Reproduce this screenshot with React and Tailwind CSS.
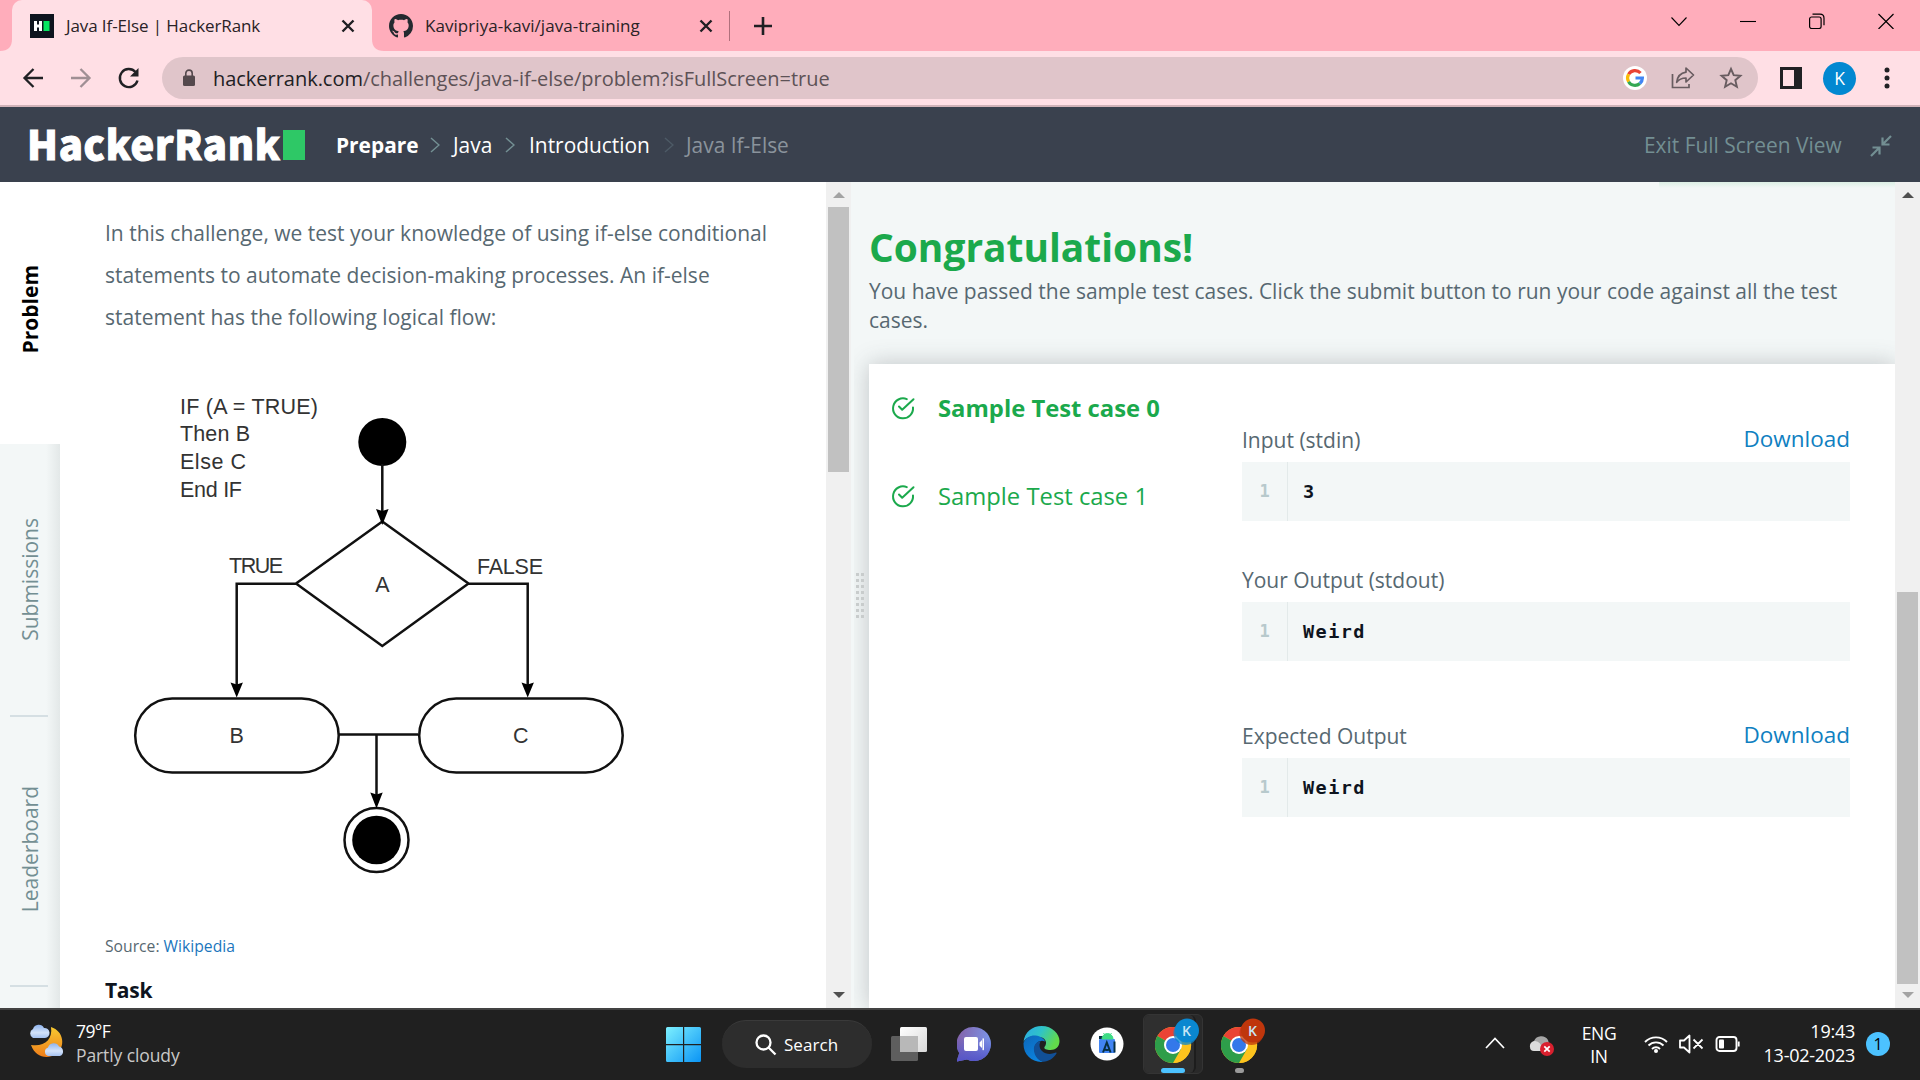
import React from "react";

const UI = "font-['Open_Sans','Noto_Sans',sans-serif]";

function Stroke({ w, h, vb, color = "currentColor", sw = 2, children, className = "" }) {
  return (
    <svg width={w} height={h} viewBox={vb || `0 0 ${w} ${h}`} fill="none" stroke={color} strokeWidth={sw} className={`shrink-0 ${className}`}>
      {children}
    </svg>
  );
}

function CloseX() {
  return (
    <Stroke w={14} h={14} sw={2.4} color="#1f1f23">
      <path d="M1.5 1.5l11 11M12.5 1.5l-11 11" />
    </Stroke>
  );
}

function TabStrip() {
  return (
    <div className="flex h-[51px] shrink-0 bg-[#ffadbb] text-[#2a2226]">
      <svg width="12" height="51" className="shrink-0">
        <path d="M12 0v51H0c8 0 12-4 12-12z" fill="#ffdfe5" />
      </svg>
      <div className="flex h-[51px] w-[360px] items-center rounded-t-[10px] bg-[#ffdfe5] pl-[18px]">
        <svg width="24" height="24" viewBox="0 0 24 24" className="shrink-0">
          <rect width="24" height="24" fill="#0e141e" />
          <path d="M4 7h3v3.6h2V7h3v10H9v-3.6H7V17H4z" fill="#fff" />
          <rect x="13.5" y="7" width="6" height="10" fill="#05e561" />
        </svg>
        <span className="ml-3 w-[275px] whitespace-nowrap text-[17px] tracking-[-0.1px]">Java If-Else | HackerRank</span>
        <CloseX />
      </div>
      <svg width="12" height="51" className="shrink-0">
        <path d="M0 0v51H12C4 51 0 47 0 39z" fill="#ffdfe5" />
      </svg>
      <div className="flex items-center pl-[5px]">
        <svg width="24" height="24" viewBox="0 0 16 16" fill="#24292f" className="shrink-0">
          <path d="M8 0C3.58 0 0 3.58 0 8c0 3.54 2.29 6.53 5.47 7.59.4.07.55-.17.55-.38 0-.19-.01-.82-.01-1.49-2.01.37-2.53-.49-2.69-.94-.09-.23-.48-.94-.82-1.13-.28-.15-.68-.52-.01-.53.63-.01 1.08.58 1.23.82.72 1.21 1.87.87 2.33.66.07-.52.28-.87.51-1.07-1.78-.2-3.64-.89-3.64-3.95 0-.87.31-1.59.82-2.15-.08-.2-.36-1.02.08-2.12 0 0 .67-.21 2.2.82.64-.18 1.32-.27 2-.27s1.36.09 2 .27c1.53-1.04 2.2-.82 2.2-.82.44 1.1.16 1.92.08 2.12.51.56.82 1.27.82 2.15 0 3.07-1.87 3.75-3.65 3.95.29.25.54.73.54 1.48 0 1.07-.01 1.93-.01 2.2 0 .21.15.46.55.38A8.01 8.01 0 0016 8c0-4.42-3.58-8-8-8z" />
        </svg>
        <span className="ml-3 w-[274px] whitespace-nowrap text-[17px] tracking-[0.05px]">Kavipriya-kavi/java-training</span>
        <CloseX />
        <div className="ml-[16px] h-[30px] w-px bg-[#b0707c]" />
        <Stroke w={20} h={20} sw={2.6} color="#1f1f23" className="ml-[23px]">
          <path d="M10 1v18M1 10h18" />
        </Stroke>
      </div>
      <div className="ml-auto flex items-start gap-[53px] pr-[26px] pt-[13px] text-black">
        <Stroke w={16} h={16} sw={1.1}><path d="M.5 4.5l7.5 8 7.5-8" /></Stroke>
        <Stroke w={16} h={16} sw={1.1}><path d="M0 8.5h16" /></Stroke>
        <Stroke w={16} h={16} sw={1.2}>
          <rect x=".6" y="4" width="11.500" height="11.500" rx="2" />
          <path d="M3.500 1.200h7.500q4 0 4 4v7" />
        </Stroke>
        <Stroke w={16} h={16} sw={1.2}><path d="M.5 1l15 15M15.500 1l-15 15" /></Stroke>
      </div>
    </div>
  );
}

function Toolbar() {
  return (
    <div className="flex h-14 shrink-0 items-center border-b-2 border-[#d0b2b8] bg-[#ffdfe5] text-[#202124]">
      <Stroke w={22} h={22} sw={2.3} className="ml-[22px]"><path d="M21 11H3M11.500 2L2.500 11l9 9" /></Stroke>
      <Stroke w={22} h={22} sw={2.3} color="#a08f94" className="ml-[26px]"><path d="M1 11h18M10.500 2l9 9-9 9" /></Stroke>
      <svg width="24" height="24" viewBox="0 0 24 24" className="ml-[25px] shrink-0">
        <path d="M20.500 14.500A9 9 0 1 1 18.500 6" fill="none" stroke="#202124" strokeWidth="2.4" />
        <path d="M21.500 2v8.500h-8.500z" fill="#202124" />
      </svg>
      <div className="ml-[21px] flex h-[42px] w-[1596px] items-center rounded-full bg-[#e0c5ca]">
        <svg width="14" height="18" viewBox="0 0 14 18" className="ml-5 shrink-0">
          <rect x="1" y="6.500" width="12" height="10.500" rx="1.500" fill="#55494d" />
          <path d="M3.800 7V4.300a3.200 3.200 0 0 1 6.400 0V7" fill="none" stroke="#55494d" strokeWidth="1.600" />
        </svg>
        <span className="ml-[17px] whitespace-nowrap pt-[2px] text-[20px] tracking-[-0.03px] text-[#5d5256]">
          <span className="text-[#202124]">hackerrank.com</span>/challenges/java-if-else/problem?isFullScreen=true
        </span>
        <div className="ml-auto mr-[15px] flex items-center">
          <svg width="24" height="24" viewBox="0 0 24 24">
            <circle cx="12" cy="12" r="12" fill="#fff" />
            <g fill="none" strokeWidth="3.200">
              <path d="M17.500 7A7.400 7.400 0 0 0 5.600 8.300" stroke="#ea4335" />
              <path d="M5.600 8.300a7.400 7.400 0 0 0 0 7.400" stroke="#fbbc05" />
              <path d="M5.600 15.700a7.400 7.400 0 0 0 11.300 1.800" stroke="#34a853" />
              <path d="M16.900 17.500a7.400 7.400 0 0 0 2.500-5.500H12.500" stroke="#4285f4" />
            </g>
          </svg>
          <Stroke w={24} h={24} sw={1.700} color="#685c60" className="ml-[24px]">
            <path d="M1.500 8v13.500h16.500V18" />
            <path d="M15 2l7.500 7L15 16v-4c-4.500 0-7.200 1.400-9.300 4.300C6.400 11 9.500 7 15 6.200z" strokeLinejoin="round" />
          </Stroke>
          <Stroke w={24} h={24} sw={1.900} color="#685c60" className="ml-[24px]">
            <path d="M12 3l2.700 6.200 6.700.6-5.100 4.400 1.600 6.600L12 17.300l-5.900 3.500 1.600-6.600-5.100-4.400 6.700-.6z" />
          </Stroke>
        </div>
      </div>
      <svg width="22" height="22" viewBox="0 0 22 22" className="ml-[22px] shrink-0">
        <path d="M0 0h22v22H0zM3 3v16h11V3z" fill="#202124" fillRule="evenodd" />
      </svg>
      <div className="ml-[21px] flex h-[33px] w-[33px] items-center justify-center rounded-full bg-[#0288d1] text-[17.500px] text-white">K</div>
      <svg width="6" height="22" className="ml-[28px]" fill="#202124">
        <circle cx="3" cy="3" r="2.500" /><circle cx="3" cy="11" r="2.500" /><circle cx="3" cy="19" r="2.500" />
      </svg>
    </div>
  );
}

function Crumb({ color }) {
  return <Stroke w={10} h={16} sw={1.500} color={color}><path d="M1 1l8 7-8 7" /></Stroke>;
}

function SiteHeader() {
  return (
    <div className="flex h-[75px] shrink-0 items-center bg-[#3a414e] pt-[1px] text-[20.900px] text-white">
      <span className="ml-[27px] h-[75px] w-[256px] whitespace-nowrap font-['Noto_Sans_CJK_SC','Open_Sans',sans-serif] text-[40px] font-black leading-[70px] tracking-[0.700px] [-webkit-text-stroke:1px_white]">HackerRank</span>
      <div className="h-[30px] w-[22px] bg-[#2ec866]" />
      <span className="ml-[31px] w-[94px] pt-[2px] font-bold">Prepare</span>
      <Crumb color="#738f93" />
      <span className="ml-[13px] w-[52px] pt-[2px]">Java</span>
      <Crumb color="#738f93" />
      <span className="ml-[14px] w-[135px] whitespace-nowrap pt-[2px]">Introduction</span>
      <Crumb color="#4d5a66" />
      <span className="ml-[12px] whitespace-nowrap pt-[2px] text-[#8a939c]">Java If-Else</span>
      <span className="ml-auto w-[226px] whitespace-nowrap pt-[2px] text-[#738f93]">Exit Full Screen View</span>
      <Stroke w={22} h={22} sw={2.200} color="#738f93" className="mr-[28px] mt-[1px]">
        <path d="M21 1l-8 8M12.500 2.500V9.500H19.500M1 21l8-8M2.500 12.500H9.500V19.500" />
      </Stroke>
    </div>
  );
}

function SideTabs() {
  const tab = "flex w-[60px] items-center justify-center";
  const text = "rotate-180 whitespace-nowrap [writing-mode:vertical-rl] text-[21px] leading-[28px]";
  return (
    <div className="flex w-[60px] shrink-0 flex-col bg-[linear-gradient(90deg,#f3f7f7_0px,#f3f7f7_46px,#e3e8e8_60px)] text-[#738f93]">
      <div className={`${tab} h-[262px] bg-white pb-[7px] pr-[1px]`}><span className={`${text} font-bold text-black`}>Problem</span></div>
      <div className={`${tab} h-[271px] pr-[1px]`}><span className={text}>Submissions</span></div>
      <div className="ml-[10px] h-[2px] w-[38px] bg-[#d5dfe3]" />
      <div className={`${tab} h-[268px] pb-[3px] pr-[1px]`}><span className={text}>Leaderboard</span></div>
      <div className="ml-[10px] h-[2px] w-[38px] bg-[#d5dfe3]" />
    </div>
  );
}

function ScrollTri({ up, dark }) {
  return (
    <svg width="12" height="6" className="mx-auto shrink-0">
      <path d={up ? "M0 6L6 0L12 6z" : "M0 0L6 6L12 0z"} fill={dark ? "#505050" : "#a3a3a3"} />
    </svg>
  );
}

function Flowchart() {
  const label = { fontFamily: "'Liberation Sans', Arial, sans-serif", fontSize: 21.5, fill: "#333", stroke: "none" };
  return (
    <svg width="520" height="500" viewBox="120 390 520 500" className="ml-[15px] block shrink-0" fill="none" stroke="#111" strokeWidth="2.500">
      <g style={label}>
        <text x="180" y="413.500" textLength="138">IF (A = TRUE)</text>
        <text x="180" y="440.500" textLength="70">Then B</text>
        <text x="180" y="469" textLength="66">Else C</text>
        <text x="180" y="497" textLength="62">End IF</text>
        <text x="229" y="572.500" textLength="54">TRUE</text>
        <text x="477" y="574" textLength="66">FALSE</text>
        <text x="382.300" y="591.500" textAnchor="middle">A</text>
        <text x="236.700" y="743" textAnchor="middle">B</text>
        <text x="520.800" y="743" textAnchor="middle">C</text>
      </g>
      <circle cx="382.300" cy="442" r="24" fill="#000" stroke="none" />
      <path d="M382.300 464V512M382.300 521.500L468.500 583.500L382.300 646L296 583.500zM296 583.700H236.700V688M468 583.700H527.700V688M339 734.500H418M376.500 734.500V798" />
      <rect x="135.200" y="698.500" width="203.500" height="74" rx="37" />
      <rect x="419.200" y="698.500" width="203.500" height="74" rx="37" />
      <circle cx="376.500" cy="840" r="32" />
      <circle cx="376.500" cy="840" r="24.300" fill="#000" stroke="none" />
      <g fill="#000" stroke="none">
        <path d="M376 509l6.300 2 6.300-2-6.300 16z" />
        <path d="M230.500 682.500l6.200 2 6.200-2-6.200 15z" />
        <path d="M521.500 682.500l6.200 2 6.200-2-6.200 15z" />
        <path d="M370.300 792.500l6.200 2 6.200-2-6.200 16z" />
      </g>
    </svg>
  );
}

function ProblemPane() {
  return (
    <div className="flex w-[766px] shrink-0 flex-col overflow-hidden bg-white pl-[45px] pt-[31px]">
      <p className="whitespace-nowrap text-[21px] leading-[41.900px] text-[#576871]">
        In this challenge, we test your knowledge of using if-else conditional<br />
        statements to automate decision-making processes. An if-else<br />
        statement has the following logical flow:
      </p>
      <div className="mt-[51px]"><Flowchart /></div>
      <p className="mt-[42px] h-[28px] whitespace-nowrap text-[15.700px] leading-[28px] text-[#576871]">
        Source: <span className="text-[#1b76bd]">Wikipedia</span>
      </p>
      <p className="mt-[14px] text-[21px] font-bold leading-[32px] text-[#0e141e] tracking-[-0.3px]">Task</p>
    </div>
  );
}

function CheckIcon() {
  return (
    <Stroke w={24} h={24} sw={2} color="#1ba94c">
      <path d="M22 11.500a10 10 0 1 1-6.200-8.400" strokeLinecap="round" />
      <path d="M8 10.500l3.200 3.300L22.500 3.300" strokeLinecap="round" strokeLinejoin="round" />
    </Stroke>
  );
}

function OutputBlock({ title, link, value }) {
  return (
    <div>
      <div className="flex h-[36px] items-start justify-between leading-[28px] text-[#576871]">
        <span className="whitespace-nowrap text-[21px]">{title}</span>
        {link && <span className="-mt-[1px] text-[22.500px] text-[#0f80c1]">Download</span>}
      </div>
      <div className="flex h-[59px] w-[608px] items-center bg-[#f3f7f7] font-['DejaVu_Sans_Mono',monospace] text-[18.500px] font-bold tracking-[1.450px]">
        <div className="flex h-full w-[46px] items-center justify-center border-r border-[#e3eaea] text-[17px] tracking-normal text-[#b7c9cc]">1</div>
        <span className="pl-[15px] text-[#0e141e]">{value}</span>
      </div>
    </div>
  );
}

function ResultPane() {
  return (
    <div className="flex w-[1026px] shrink-0 flex-col bg-[#f3f7f7]">
      <div className="ml-[790px] h-[6px] w-[236px] bg-[linear-gradient(180deg,#dcefe5,#f3f7f7)]" />
      <h1 className="mt-[31px] whitespace-nowrap text-[38.900px] font-bold leading-[56px] text-[#1ba94c]">Congratulations!</h1>
      <p className="mt-[2px] h-[87px] whitespace-nowrap text-[20.970px] leading-[29px] text-[#576871]">
        You have passed the sample test cases. Click the submit button to run your code against all the test<br />cases.
      </p>
      <div className="flex flex-1 bg-white shadow-[0_0_22px_rgba(60,70,75,0.28)]">
        <div className="flex w-[373px] flex-col gap-[56px] pl-[22px] pt-[28px] text-[23.800px] leading-[32px] text-[#1ba94c]">
          <div className="flex items-center gap-[23px]"><CheckIcon /><span className="whitespace-nowrap font-bold">Sample Test case 0</span></div>
          <div className="flex items-center gap-[23px]"><CheckIcon /><span className="whitespace-nowrap">Sample Test case 1</span></div>
        </div>
        <div className="flex flex-col pt-[62px]">
          <OutputBlock title="Input (stdin)" link value="3" />
          <div className="h-[45px]" />
          <OutputBlock title="Your Output (stdout)" value="Weird" />
          <div className="h-[61px]" />
          <OutputBlock title="Expected Output" link value="Weird" />
        </div>
      </div>
    </div>
  );
}

function Main() {
  return (
    <div className="flex h-[826px] shrink-0 overflow-hidden bg-white">
      <SideTabs />
      <ProblemPane />
      <div className="z-10 flex w-[25px] shrink-0 flex-col bg-[#f0f0f0] pt-[10px]">
        <ScrollTri up />
        <div className="ml-[2px] mt-[9px] h-[265px] w-[21px] bg-[#c1c1c1]" />
        <div className="mt-auto pb-[10px]"><ScrollTri dark /></div>
      </div>
      <div className="z-10 w-[3px] shrink-0 bg-[#f3f7f7]" />
      <div className="flex w-[15px] shrink-0 items-start bg-[#f3f7f7] pl-[2px] pt-[391px]">
        <div className="grid grid-cols-2 gap-x-[2px] gap-y-[3px]">
          {Array.from({ length: 16 }, (_, i) => <div key={i} className="relative z-10 h-[3px] w-[3px] bg-[#c8cccc]" />)}
        </div>
      </div>
      <ResultPane />
      <div className="z-10 flex w-[25px] shrink-0 flex-col bg-[#f0f0f0] pt-[10px]">
        <ScrollTri up dark />
        <div className="ml-[2px] mt-[394px] h-[392px] w-[21px] bg-[#c1c1c1]" />
        <div className="mt-auto pb-[10px]"><ScrollTri /></div>
      </div>
    </div>
  );
}

function Chrome({ badge }) {
  return (
    <svg width="46" height="48" viewBox="0 0 46 48" className="shrink-0">
      <circle cx="18" cy="30" r="18" fill="#fcc31e" />
      <path d="M18 30L2.400 21A18 18 0 0 1 33.600 21z" fill="#ea4335" />
      <path d="M33.600 21H18L25.800 34.500 18 48A18 18 0 0 0 33.600 21z" fill="#fcc31e" />
      <path d="M2.400 21A18 18 0 0 0 18 48l8-14-8-4z" fill="#2e9e4a" />
      <circle cx="18" cy="30" r="9" fill="#fff" />
      <circle cx="18" cy="30" r="7" fill="#3478ea" />
      <circle cx="30.500" cy="18" r="12" fill={badge} opacity=".75" />
      <circle cx="32" cy="15.500" r="12" fill={badge} />
      <text x="31.500" y="20.500" textAnchor="middle" fontSize="14" fontWeight="600" fill="#c9e6f5" fontFamily="Open Sans, sans-serif">K</text>
    </svg>
  );
}

function Taskbar() {
  return (
    <div className="flex h-[72px] shrink-0 border-t-2 border-[#434343] bg-[#202020] text-white">
      <div className="flex w-[666px] items-start pl-[28px] pt-[9px]">
        <svg width="38" height="38" viewBox="0 0 38 38" className="mt-[4px] shrink-0">
          <defs>
            <linearGradient id="moon" x2="0" y2="1"><stop stopColor="#f7c931" /><stop offset="1" stopColor="#ef7d1a" /></linearGradient>
            <linearGradient id="cloud" x2="0" y2="1"><stop stopColor="#8fb4ee" /><stop offset=".6" stopColor="#d4e3fa" /><stop offset="1" stopColor="#a5c2f1" /></linearGradient>
          </defs>
          <path d="M23 4C36 8 38 24 28 31C19 37 7 34 3 22C16 24 25 17 23 4z" fill="url(#moon)" />
          <path d="M5 15a5 5 0 0 1 0-9a6 6 0 0 1 11-1a5 5 0 0 1 1 10z" fill="url(#cloud)" />
          <path d="M20 33a4.500 4.500 0 0 1 0-8.500a6 6 0 0 1 11-1a5 5 0 0 1 1 9.500z" fill="url(#cloud)" />
        </svg>
        <div className="ml-[10px] whitespace-nowrap text-[17.500px] leading-[24px] tracking-[-0.100px]">
          <div className="tracking-[-0.600px]">79°F</div>
          <div className="text-[#c8c8c8]">Partly cloudy</div>
        </div>
      </div>
      <svg width="35" height="35" viewBox="0 0 35 35" className="mt-[17px] shrink-0">
        <defs><linearGradient id="win" x2="1" y2="1"><stop stopColor="#7df0ff" /><stop offset="1" stopColor="#0a94f5" /></linearGradient></defs>
        <path d="M0 1.500Q0 0 1.500 0H17V17H0zM18.200 0H33.500Q35 0 35 1.500V17H18.200zM0 18.200H17V35H1.500Q0 35 0 33.500zM18.200 18.200H35V33.500Q35 35 33.500 35H18.200z" fill="url(#win)" />
      </svg>
      <div className="ml-[21px] mt-[10px] flex h-[48px] w-[150px] items-center rounded-full border-t border-[#3a3a3a] bg-[#2d2d2d] pl-[33px]">
        <Stroke w={22} h={22} sw={2.300}><circle cx="8.500" cy="8.500" r="7" /><path d="M13.500 13.500l7 7" /></Stroke>
        <span className="ml-[7px] text-[17px] tracking-[0.050px]">Search</span>
      </div>
      <svg width="37" height="36" viewBox="0 0 37 36" className="ml-[19px] mt-[17px] shrink-0">
        <defs><linearGradient id="tv" x2="1" y2="1"><stop stopColor="#fff" /><stop offset="1" stopColor="#d9d9d9" /></linearGradient></defs>
        <rect x="9" y="0" width="27" height="25" rx="1.500" fill="url(#tv)" />
        <rect x="0" y="9" width="27" height="25" rx="1.500" fill="#5e5e5e" />
        <path d="M9 9H27V25H9z" fill="#b8b8b8" />
      </svg>
      <svg width="35" height="36" viewBox="0 0 35 36" className="ml-[29px] mt-[17px] shrink-0">
        <defs><linearGradient id="chat" x1="0" x2="1" y1=".1" y2=".3"><stop stopColor="#8460a6" /><stop offset="1" stopColor="#7b96ea" /></linearGradient>
          <linearGradient id="chat2" x2="0" y2="1"><stop offset=".3" stopColor="#4f52c8" stopOpacity="0" /><stop offset="1" stopColor="#5454c8" /></linearGradient></defs>
        {["url(#chat)", "url(#chat2)"].map((f) => <path key={f} d="M17 0a17 17 0 1 1-7 32.500L0 34.500V33L2.200 26A17 17 0 0 1 17 0z" fill={f} />)}
        <rect x="7" y="10" width="14" height="14" rx="2" fill="#fff" />
        <path d="M22.500 15.500l2.500-2.500v8l-2.500-2.500zM25.500 11.500q1.500-1 1.500 1v9.500q0 2-1.500 1z" fill="#fff" />
      </svg>
      <svg width="37" height="36" viewBox="0 0 36 36" className="ml-[31px] mt-[16px] shrink-0">
        <defs>
          <linearGradient id="edgeTop" x2="1" y2=".4"><stop stopColor="#2ba9e8" /><stop offset=".5" stopColor="#2fc3c8" /><stop offset="1" stopColor="#62da4b" /></linearGradient>
          <linearGradient id="edgeBody" x2=".6" y2="1"><stop stopColor="#0d66b8" /><stop offset="1" stopColor="#0b84e0" /></linearGradient>
        </defs>
        <path d="M0 16C1 6 9 0 18 0c11 0 18 8 18 15 0 6-4 9-9 9-4 0-7-1-6-3 4-5 0-10-6-10C8 9 2 12 0 16z" fill="url(#edgeTop)" />
        <path d="M0 17C2 11 8 9 12 9.500c5 .5 9 3.500 9.500 6C17 13 11 17 11 23c0 6 4 11 9 12.800C9 37 0 29 0 18z" fill="url(#edgeBody)" />
        <path d="M17 15c-5 1-7 5-6.500 9.500C11 31 16 35.500 20 35.800c5-.3 10-3.300 13-8.300.3-1-.5-1.200-1.300-.7C24 30 15.500 26 16 18.500z" fill="#114f96" />
      </svg>
      <svg width="34" height="34" viewBox="0 0 34 34" className="ml-[30px] mt-[17px] shrink-0">
        <circle cx="17" cy="17" r="16.500" fill="#fff" />
        <rect x="9" y="12" width="16" height="14" rx="1" fill="#4285f4" />
        <path d="M9 9h4v3H9z" fill="#073042" />
        <path d="M12 12a5.500 5.500 0 0 1 11 0zM13.500 6l2 3M21.500 6l-2 3" fill="#3ddc84" stroke="#3ddc84" />
        <path d="M13 25.500l3.800-10 3.800 10M14 22q3 2 6 0M24.500 14.500v11" fill="none" stroke="#073042" strokeWidth="2" />
      </svg>
      <div className="ml-[19px] mt-[4px] flex h-[60px] w-[60px] rounded-[6px] border border-[#343434] bg-[#292929]">
        <div className="flex h-full w-[52px] shrink-0 flex-col rounded-[6px] border-r-2 border-[#1d1d1d] bg-[#2f2f2f] pl-[11px]">
          <div className="h-[53px]"><Chrome badge="#0a87d0" /></div>
          <div className="ml-[6px] h-[5px] w-[24px] rounded-full bg-[#4cc2ff]" />
        </div>
      </div>
      <div className="ml-[18px] flex flex-col pt-[5px]">
        <div className="h-[53px]"><Chrome badge="#bf360c" /></div>
        <div className="ml-[14px] h-[5px] w-[9px] rounded-full bg-[#9a9a9a]" />
      </div>
      <div className="ml-auto flex items-start">
        <Stroke w={20} h={12} sw={1.700} className="mt-[27px]"><path d="M1 11l9-9.500 9 9.500" /></Stroke>
        <svg width="26" height="22" viewBox="0 0 26 22" className="ml-[24px] mt-[25px] shrink-0">
          <path d="M6 16A5.500 5.500 0 0 1 5 6 8 8 0 0 1 19 5l3 11z" fill="#a6a6a6" />
          <path d="M1 12a5 5 0 0 1 5-6q6 0 8 10H5q-4 0-4-4z" fill="#dcdcdc" />
          <circle cx="18" cy="14" r="7" fill="#d9202e" />
          <path d="M15.300 11.300l5.400 5.400M20.700 11.300l-5.400 5.400" stroke="#fff" strokeWidth="1.700" />
        </svg>
        <div className="mt-[12px] w-[88px] text-center text-[17.500px] leading-[23px] tracking-[-0.400px]">ENG<br />IN</div>
        <Stroke w={26} h={20} sw={1.900} className="mt-[24px]">
          <path d="M2 8a15.500 15.500 0 0 1 22 0M5.500 11.500a10.600 10.600 0 0 1 15 0M9 15a5.600 5.600 0 0 1 8 0" />
          <circle cx="13" cy="17" r="2" fill="#fff" stroke="none" />
        </Stroke>
        <Stroke w={25} h={20} sw={1.800} className="ml-[10px] mt-[24px]">
          <path d="M1 6.500h4l5.500-5v17l-5.500-5H1zM14.500 5.500l9 9M23.500 5.500l-9 9" strokeLinejoin="round" />
        </Stroke>
        <Stroke w={26} h={18} sw={1.900} className="ml-[11px] mt-[25px]">
          <rect x="1.500" y="2" width="20" height="14" rx="3" />
          <rect x="4" y="4.500" width="5" height="9" rx="1" fill="#fff" stroke="none" />
          <path d="M23.700 6.500v5" />
        </Stroke>
        <div className="mt-[9px] w-[114px] whitespace-nowrap text-right text-[18px] leading-[24px] tracking-[-0.250px]">19:43<br />13-02-2023</div>
        <div className="ml-[11px] mr-[30px] mt-[22px] flex h-[24px] w-[24px] items-center justify-center rounded-full bg-[#4cc2ff] text-[16px] text-black">1</div>
      </div>
    </div>
  );
}

export default function App() {
  return (
    <div className={`flex h-[1080px] w-[1920px] flex-col overflow-hidden ${UI}`}>
      <TabStrip />
      <Toolbar />
      <SiteHeader />
      <Main />
      <Taskbar />
    </div>
  );
}
